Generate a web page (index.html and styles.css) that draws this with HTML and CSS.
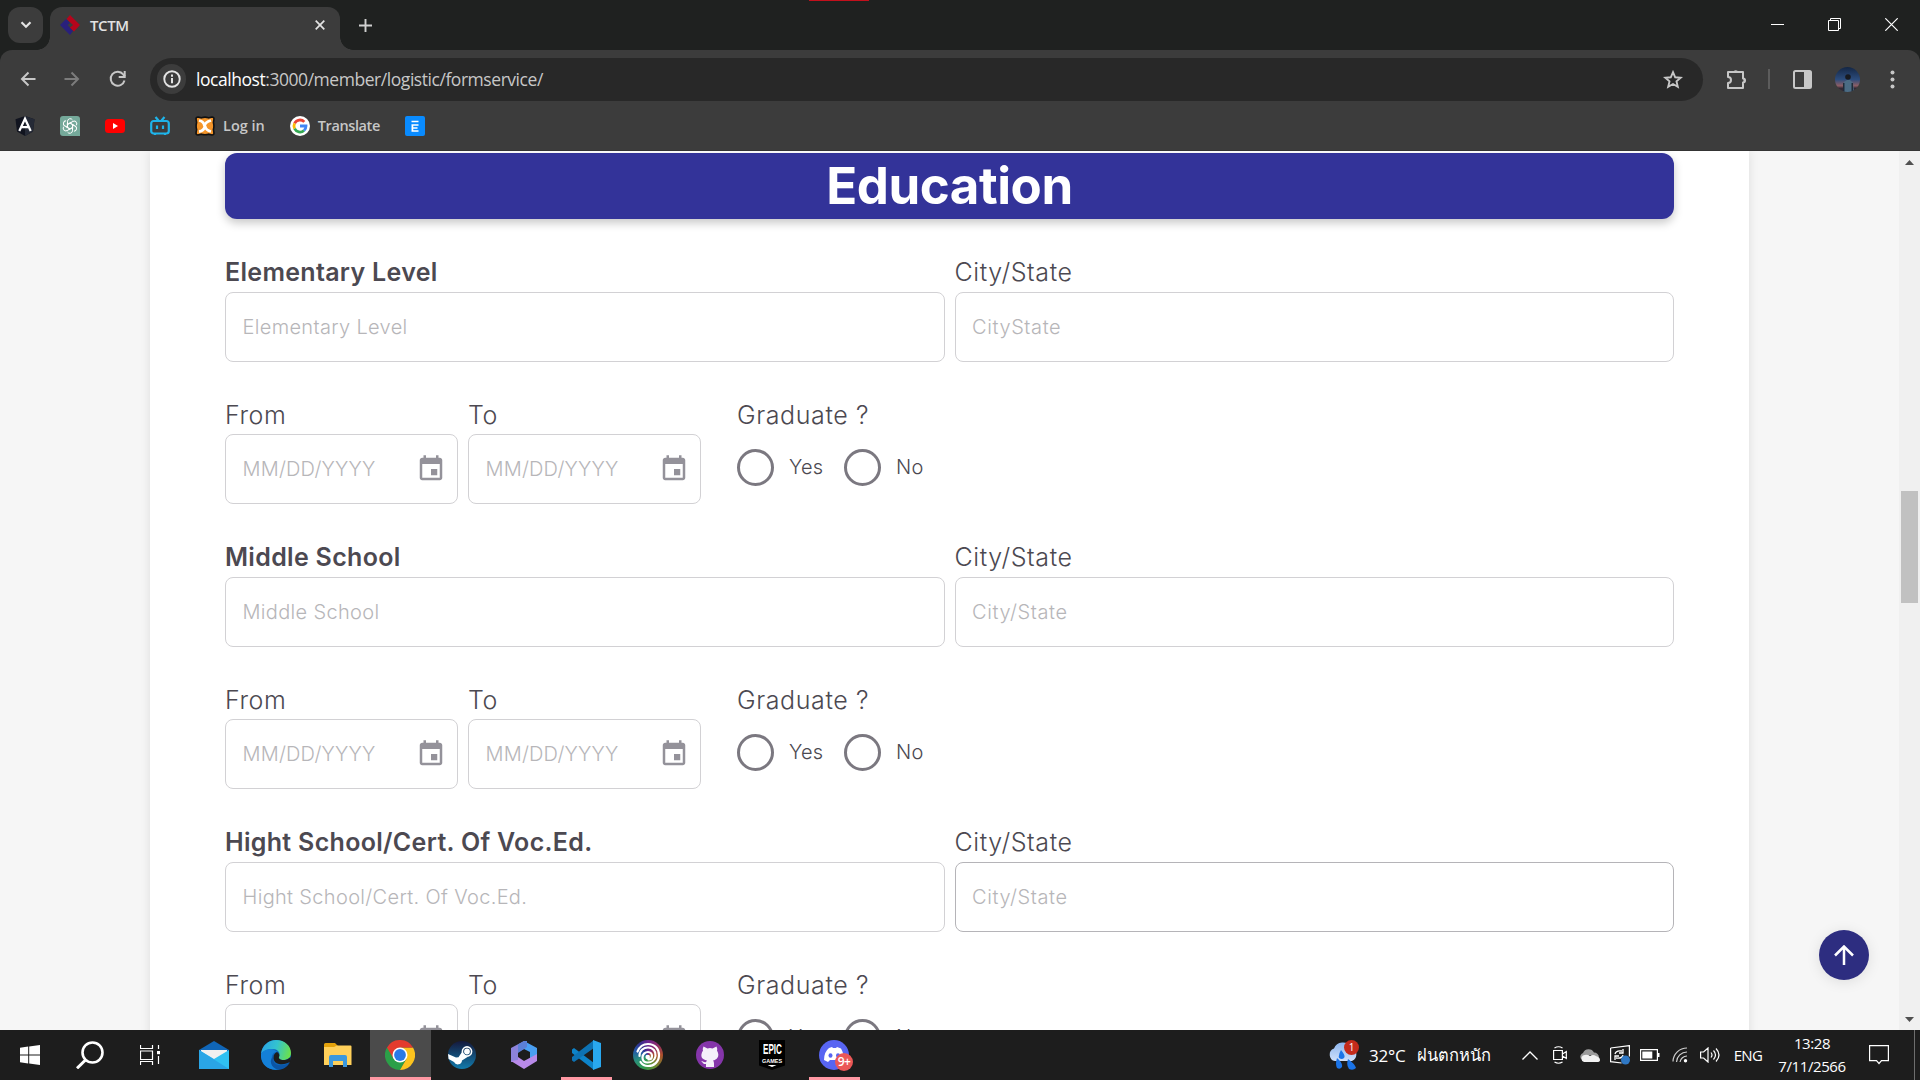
FILE: index.html
```html
<!DOCTYPE html>
<html lang="en">
<head>
<meta charset="utf-8">
<title>TCTM</title>
<link rel="stylesheet" href="styles.css">
</head>
<body>
<div class="screen">
  <header class="browser">
    <div class="tabstrip">
      <div class="tab-search"><svg width="12" height="8" viewBox="0 0 12 8"><path d="M1.500 1.300 6 5.800l4.500-4.500" fill="none" stroke="#e3e3e3" stroke-width="2.200"/></svg></div>
      <div class="tab">
        <svg width="20" height="20" viewBox="0 0 20 20"><path d="M10 0l10 10-6 6.500-4.500-3.500L13 10 6.500 4z" fill="#b5051c"/><path d="M6 4 0 10l10 10 3-4-5.500-6L10 8z" fill="#29207c"/></svg>
        <span class="tab-title">TCTM</span>
        <svg width="10" height="10" viewBox="0 0 10 10"><path d="M.7.7l8.600 8.600M9.300.7.7 9.300" stroke="#e3e3e3" stroke-width="1.700"/></svg>
      </div>
      <svg class="new-tab" width="13" height="13" viewBox="0 0 13 13"><path d="M6.500 0v13M0 6.500h13" stroke="#d0d0d0" stroke-width="1.900"/></svg>
      <div class="window-controls">
        <svg width="13" height="13" viewBox="0 0 13 13"><path d="M0 6.500h13" stroke="#fff"/></svg>
        <svg width="13" height="13" viewBox="0 0 13 13"><path d="M.5 2.500h10v10h-10zM2.500 2.500v-2h10v10h-2" fill="none" stroke="#fff"/></svg>
        <svg width="13" height="13" viewBox="0 0 13 13"><path d="M.3.3l12.400 12.400M12.700.3.3 12.700" stroke="#fff" stroke-width="1.200"/></svg>
      </div>
      <div class="record-mark"></div>
    </div>
    <div class="toolbar">
      <svg class="nav-icon" width="16" height="16" viewBox="0 0 16 16"><path d="M15.500 8H2M8.500 1.500 2 8l6.500 6.500" fill="none" stroke="#c7c7c7" stroke-width="2"/></svg>
      <svg class="nav-icon" width="16" height="16" viewBox="0 0 16 16"><path d="M.5 8H14M7.500 1.500 14 8l-6.500 6.500" fill="none" stroke="#7c7c7c" stroke-width="2"/></svg>
      <svg class="nav-icon" width="18" height="18" viewBox="0 0 18 18"><path d="M15.500 10.500a7 7 0 1 1-1.200-6L16 6.500" fill="none" stroke="#c7c7c7" stroke-width="2"/><path d="M16.700 1v7h-7V6h5V1z" fill="#c7c7c7"/></svg>
      <div class="address">
        <span class="site-info"><svg width="18" height="18" viewBox="0 0 17 17"><circle cx="8.500" cy="8.500" r="7.300" fill="none" stroke="#e3e3e3" stroke-width="1.800"/><path d="M8.500 7.500v5M8.500 4.300v2" stroke="#e3e3e3" stroke-width="1.900"/></svg></span>
        <span class="url"><b>localhost</b>:3000/member/logistic/formservice/</span>
        <svg width="20" height="19" viewBox="0 0 20 19"><path d="M10 2.200l2.200 5.100 5.500.5-4.200 3.600 1.300 5.400L10 14l-4.800 2.800 1.300-5.400L2.300 7.800l5.500-.5z" fill="none" stroke="#c7c7c7" stroke-width="1.900"/></svg>
      </div>
      <div class="tools">
        <svg width="21" height="21" viewBox="0 0 21 21"><path d="M2 3h15v6.500a2 2 0 0 1 0 4V19H2v-5a3 3 0 0 0 0-6z" fill="none" stroke="#c7c7c7" stroke-width="2" stroke-linejoin="round"/><path d="M7 3a3 3 0 0 1 5.500 0zM17.500 8.500a3 3 0 0 1 0 5.600z" fill="#c7c7c7"/></svg>
        <i class="divider"></i>
        <svg width="19" height="19" viewBox="0 0 19 19"><rect x="1" y="1" width="17" height="17" rx="1.500" fill="none" stroke="#c7c7c7" stroke-width="2"/><path d="M11 1h7v17h-7z" fill="#c7c7c7"/></svg>
        <svg width="25" height="25" viewBox="0 0 25 25"><defs><clipPath id="av"><circle cx="12.500" cy="12.500" r="12.500"/></clipPath><linearGradient id="sky" x2="0" y2="1"><stop offset="0" stop-color="#142644"/><stop offset=".5" stop-color="#2c4c7c"/><stop offset=".75" stop-color="#8d5e65"/><stop offset=".85" stop-color="#332836"/></linearGradient></defs><g clip-path="url(#av)"><path d="M0 0h25v25H0z" fill="url(#sky)"/><path d="M8 25l1-10 3-2h3l3 3 1 9z" fill="#4b6c85"/><circle cx="13" cy="10" r="2.800" fill="#171a20"/><path d="M8 16h1.500v9H8zM16.500 16H18v9h-1.500z" fill="#202b38"/></g></svg>
        <svg width="5" height="19" viewBox="0 0 5 19"><g fill="#c7c7c7"><circle cx="2.500" cy="2.500" r="2"/><circle cx="2.500" cy="9.500" r="2"/><circle cx="2.500" cy="16.500" r="2"/></g></svg>
      </div>
    </div>
    <nav class="bookmarks">
      <svg width="20" height="20" viewBox="0 0 19 20"><path d="M9.500 0 19 3.300l-1.500 12.300-8 4.400-8-4.400L0 3.300z" fill="#11141f"/><path d="M9.500 0 19 3.300l-1.500 12.300-8 4.400z" fill="#252a36"/><path d="M3.800 15 9.500 2.700 15.200 15M6 11.200h7" fill="none" stroke="#fff" stroke-width="2.200"/></svg>
      <svg width="20" height="20" viewBox="0 0 20 20"><path d="M3 0h14a3 3 0 0 1 3 3v17H3a3 3 0 0 1-3-3V3a3 3 0 0 1 3-3z" fill="#75a99a"/><g fill="none" stroke="#fff" stroke-width="1"><path id="petal" d="M7.500 8.500V5.200a2.700 2.700 0 0 1 5-1.200M7.500 8.500 10 7l4 2.300"/><use href="#petal" transform="rotate(60 10 10)"/><use href="#petal" transform="rotate(120 10 10)"/><use href="#petal" transform="rotate(180 10 10)"/><use href="#petal" transform="rotate(240 10 10)"/><use href="#petal" transform="rotate(300 10 10)"/></g></svg>
      <svg width="20" height="20" viewBox="0 0 20 20"><rect y="3" width="20" height="14" rx="3.500" fill="#f00"/><path d="M8 7v6l5-3z" fill="#fff"/></svg>
      <svg width="20" height="20" viewBox="0 0 20 20"><rect x="1.200" y="5" width="17.600" height="12.500" rx="2.500" fill="none" stroke="#1eb4ea" stroke-width="2.200"/><path d="M5.500 1l3 3.500M14.500 1l-3 3.500M7 9.500V13M13 9.500V13M5 17.500V19M15 17.500V19" stroke="#1eb4ea" stroke-width="2.200"/></svg>
      <span class="bm-link"><svg width="20" height="20" viewBox="0 0 20 20"><path d="M3 1l3.500.8Q10 .5 13.500 1.800L17 1q2 0 2 2l-.6 3.500q1 3.500 0 7L19 17q0 2-2 2l-3.500-.8q-3.500 1-7 0L3 19q-2 0-2-2l.6-3.500q-1-3.500 0-7L1 3q0-2 2-2z" fill="#f4952a" stroke="#111" stroke-width="1.600"/><path d="M4 4.500q5 1 5.500 5.500Q10 6 16 4.500M4 15.500q5-.5 6-5.500 1 4.500 6 5.500" stroke="#fff" stroke-width="2.800" fill="none"/></svg><span>Log in</span></span>
      <span class="bm-link"><svg width="20" height="20" viewBox="0 0 20 20"><circle cx="10" cy="10" r="10" fill="#fff"/><g fill="none" stroke-width="2.800"><path d="M14.300 5.900A6 6 0 0 0 4.600 7.300" stroke="#ea4335"/><path d="M4.600 7.300a6 6 0 0 0 0 5.400" stroke="#fbbc05"/><path d="M4.600 12.700a6 6 0 0 0 9.400 1.800" stroke="#34a853"/><path d="M10 10h6a6 6 0 0 1-2 4.500" stroke="#4285f4"/></g></svg><span>Translate</span></span>
      <svg width="20" height="20" viewBox="0 0 20 20"><rect width="20" height="20" rx="2" fill="#098bff"/><path d="M6.500 5.500h7M6.500 9h7M6.500 15h7M7.400 9v6M6.500 12h6" stroke="#fff" stroke-width="1.700"/></svg>
    </nav>
  </header>

  <div class="viewport">
    <main class="page">
      <section class="paper">
        <h1 class="banner">Education</h1>

        <div class="row schools">
          <div class="field"><label class="strong">Elementary Level</label><div class="input">Elementary Level</div></div>
          <div class="field"><label>City/State</label><div class="input">CityState</div></div>
        </div>
        <div class="row dates">
          <div class="field"><label>From</label><div class="input date"><span>MM/DD/YYYY</span><svg viewBox="0 0 24 24"><path d="M17 12h-5v5h5v-5zM16 1v2H8V1H6v2H5c-1.110 0-1.990.9-1.990 2L3 19c0 1.100.89 2 2 2h14c1.100 0 2-.9 2-2V5c0-1.100-.9-2-2-2h-1V1h-2zm3 18H5V8h14v11z"/></svg></div></div>
          <div class="field"><label>To</label><div class="input date"><span>MM/DD/YYYY</span><svg viewBox="0 0 24 24"><path d="M17 12h-5v5h5v-5zM16 1v2H8V1H6v2H5c-1.110 0-1.990.9-1.990 2L3 19c0 1.100.89 2 2 2h14c1.100 0 2-.9 2-2V5c0-1.100-.9-2-2-2h-1V1h-2zm3 18H5V8h14v11z"/></svg></div></div>
          <div class="field graduate"><label>Graduate ?</label><div class="choices"><i class="radio"></i><span class="yes">Yes</span><i class="radio"></i><span>No</span></div></div>
        </div>

        <div class="row schools">
          <div class="field"><label class="strong">Middle School</label><div class="input">Middle School</div></div>
          <div class="field"><label>City/State</label><div class="input">City/State</div></div>
        </div>
        <div class="row dates">
          <div class="field"><label>From</label><div class="input date"><span>MM/DD/YYYY</span><svg viewBox="0 0 24 24"><path d="M17 12h-5v5h5v-5zM16 1v2H8V1H6v2H5c-1.110 0-1.990.9-1.990 2L3 19c0 1.100.89 2 2 2h14c1.100 0 2-.9 2-2V5c0-1.100-.9-2-2-2h-1V1h-2zm3 18H5V8h14v11z"/></svg></div></div>
          <div class="field"><label>To</label><div class="input date"><span>MM/DD/YYYY</span><svg viewBox="0 0 24 24"><path d="M17 12h-5v5h5v-5zM16 1v2H8V1H6v2H5c-1.110 0-1.990.9-1.990 2L3 19c0 1.100.89 2 2 2h14c1.100 0 2-.9 2-2V5c0-1.100-.9-2-2-2h-1V1h-2zm3 18H5V8h14v11z"/></svg></div></div>
          <div class="field graduate"><label>Graduate ?</label><div class="choices"><i class="radio"></i><span class="yes">Yes</span><i class="radio"></i><span>No</span></div></div>
        </div>

        <div class="row schools">
          <div class="field"><label class="strong">Hight School/Cert. Of Voc.Ed.</label><div class="input">Hight School/Cert. Of Voc.Ed.</div></div>
          <div class="field"><label>City/State</label><div class="input hover">City/State</div></div>
        </div>
        <div class="row dates">
          <div class="field"><label>From</label><div class="input date"><span>MM/DD/YYYY</span><svg viewBox="0 0 24 24"><path d="M17 12h-5v5h5v-5zM16 1v2H8V1H6v2H5c-1.110 0-1.990.9-1.990 2L3 19c0 1.100.89 2 2 2h14c1.100 0 2-.9 2-2V5c0-1.100-.9-2-2-2h-1V1h-2zm3 18H5V8h14v11z"/></svg></div></div>
          <div class="field"><label>To</label><div class="input date"><span>MM/DD/YYYY</span><svg viewBox="0 0 24 24"><path d="M17 12h-5v5h5v-5zM16 1v2H8V1H6v2H5c-1.110 0-1.990.9-1.990 2L3 19c0 1.100.89 2 2 2h14c1.100 0 2-.9 2-2V5c0-1.100-.9-2-2-2h-1V1h-2zm3 18H5V8h14v11z"/></svg></div></div>
          <div class="field graduate"><label>Graduate ?</label><div class="choices"><i class="radio"></i><span class="yes">Yes</span><i class="radio"></i><span>No</span></div></div>
        </div>
      </section>
      <div class="to-top"><svg width="20" height="20" viewBox="0 0 20 20"><path d="M10 20V2M1 10.500l9-9 9 9" fill="none" stroke="#fff" stroke-width="2.500"/></svg></div>
    </main>
    <aside class="scrollbar">
      <svg width="9" height="5" viewBox="0 0 9 5"><path d="M0 5 4.500 0 9 5z" fill="#505050"/></svg>
      <div class="thumb"></div>
      <svg width="9" height="5" viewBox="0 0 9 5"><path d="M0 0h9L4.500 5z" fill="#505050"/></svg>
    </aside>
  </div>

  <footer class="taskbar">
    <div class="sys"><svg width="20" height="20" viewBox="0 0 20 20"><path d="M0 2.700 8.200 1.600V9.400H0zM9.200 1.400 20 0v9.400H9.200zM0 10.400h8.200v8L0 17.300zM9.200 10.400H20V20L9.200 18.500z" fill="#fff"/></svg></div>
    <div class="sys"><svg width="28" height="28" viewBox="0 0 28 28"><circle cx="16.500" cy="11.500" r="10" fill="none" stroke="#fff" stroke-width="2.600"/><path d="M9.500 19 1 27.300" stroke="#fff" stroke-width="3"/></svg></div>
    <div class="sys"><svg width="20" height="20" viewBox="0 0 20 20"><path d="M.5 0v3.500h12V0M.5 20v-3.500h12V20M.5 6h12v8.500H.5zM18.500 0v4M18.500 11v8" fill="none" stroke="#fff" stroke-width="1.200"/><path d="M17 6h3v3.200h-3z" fill="#fff"/></svg></div>
    <div class="apps">
      <div class="app"><svg width="30" height="28" viewBox="0 0 30 28"><path d="M0 9 15 0l15 9v5H0z" fill="#1066b8"/><path d="M2 9h26v12H2z" fill="#f0f0f0"/><path d="M0 9l15 9L30 9v19H0z" fill="#2fc0f2"/><path d="M0 9l30 19H0z" fill="#2aa5e6"/></svg></div>
      <div class="app"><svg width="30" height="30" viewBox="0 0 30 30"><defs><linearGradient id="eg" x1="0" y1=".3" x2="1" y2=".5"><stop offset="0" stop-color="#2aa3e6"/><stop offset=".5" stop-color="#33c3cf"/><stop offset="1" stop-color="#6be04c"/></linearGradient></defs><circle cx="15" cy="15" r="15" fill="#0d64b8"/><path d="M0 14C1 5 8 0 15 0c9 0 15 6 15 13 0 5-4 7-8 7-3 0-5-1-4-3 2-5-2-8-6-8C7 9 2 11 0 14z" fill="url(#eg)"/><path d="M0 14c2-4 7-5 10-5 3 0 5 2 6 3-4 0-6 4-5 8 1 5 5 8 8 9C9 32-1 25 0 14z" fill="#1480d8"/><path d="M16 12c-6 3-4 11 2 12 5 1 8-1 11-2l1-5-4 2.500c-5 1.500-9-.5-8-2.500s0-4-2-5z" fill="#1d1d1d"/><path d="M13 16c-2 4 0 9 5 9 5 1 8-1 11-3-3 6-9 9-14 7-6-3-7-10-2-13z" fill="#0b55a5"/></svg></div>
      <div class="app"><svg width="28" height="24" viewBox="0 0 28 24"><path d="M0 1.500Q0 0 1.500 0H11l3 3h12v6H0z" fill="#e4a20b"/><path d="M0 4h10l3-1.500h13.500q1 0 1 1V22H0z" fill="#ffd05a"/><path d="M5 24V14q0-2 2-2h14q2 0 2 2v10h-4v-6h-10v6z" fill="#3b98dd"/></svg></div>
      <div class="app active"><svg width="30" height="30" viewBox="0 0 30 30"><path d="M15 15 2 7.500A15 15 0 0 0 15 30l6.500-11.300z" fill="#2b9f48"/><path d="M15 7.500h13A15 15 0 0 1 15 30l6.500-11.300z" fill="#fcc31e"/><path d="M2 7.500A15 15 0 0 1 28 7.500H15l-6.500 11.300z" fill="#e33b2e"/><circle cx="15" cy="15" r="7.500" fill="#fff"/><circle cx="15" cy="15" r="5.900" fill="#2a79e8"/></svg></div>
      <div class="app"><svg width="28" height="28" viewBox="0 0 28 28"><defs><linearGradient id="st" x2="0" y2="1"><stop offset="0" stop-color="#15183b"/><stop offset="1" stop-color="#127bac"/></linearGradient></defs><circle cx="14" cy="14" r="14" fill="url(#st)"/><circle cx="19" cy="10.500" r="4.600" fill="none" stroke="#fff" stroke-width="1.600"/><circle cx="19" cy="10.500" r="2.900" fill="#fff"/><path d="M0 13l8 3.500 2.500-.2L14 11l5.500 5-5.500 3.500a4.200 4.200 0 0 1-8 1.500L.6 18z" fill="#fff"/></svg></div>
      <div class="app"><svg width="26" height="28" viewBox="0 0 26 28"><path d="M13 0 26 7v12l-7-2V11l-6-3z" fill="#4a9ff2"/><path d="M0 7 13 0v8L7 11v9l-7 1z" fill="#8c83dc"/><path d="M7 3.500 13 0h3v6l-9 6z" fill="#5b7fd6"/><path d="M0 20l7-1v-3l6 4 13-7v7l-13 8z" fill="#b88ae9"/><path d="M9.500 11.500l4-2.500 4 2.500v5l-4 2.500-4-2.500z" fill="#1d1d1d"/></svg></div>
      <div class="app open"><svg width="30" height="30" viewBox="0 0 30 30"><path d="M1 9.500 3 8l20 15v7L1 13z" fill="#0d83c9"/><path d="M1 20.500 3 22 23 8V0L1 17z" fill="#0d72b3"/><path d="M22 0l8 3v24l-8 3z" fill="#29a8ef"/></svg></div>
      <div class="app"><svg class="swirl" width="30" height="30" viewBox="0 0 30 30"><g fill="none" stroke="#fff" stroke-width="2.200" stroke-linecap="round"><path d="M4.500 11.500C7 5.500 12 4 15 4c7 0 11 5 11 11 0 7-5 11-11 11-3 0-6-1.500-7.500-4"/><path d="M6.500 16C6.500 10 11 7.500 15 7.500c5 0 8 4 7.500 8.500-.5 4-4 6.500-8 6.500-3 0-5-2-5-5 0-3.500 3-5.500 5.500-5.500s4 2 4 4-1.500 3.500-3.500 3.500"/></g><circle cx="14.700" cy="17" r="2.300" fill="#fff"/></svg></div>
      <div class="app"><svg width="28" height="28" viewBox="0 0 28 28"><circle cx="14" cy="14" r="14" fill="#8535aa"/><path d="M7.500 5.500l4 2q2.500-.8 5 0l4-2q1 2 .5 4c3.500 6-.5 9.500-4 10q1 1 1 3v3.500h-8v-3c-3 .7-3.500-2.500-5-3 2-.5 3 2 5 1l1-1.500c-5-1-7.500-4-4-10q-.5-2 .5-4z" fill="#f4effa"/></svg></div>
      <div class="app"><span class="epic"><b>EPIC</b><small>GAMES</small><i></i></span></div>
      <div class="app open discord"><svg width="30" height="30" viewBox="0 0 30 30"><circle cx="15" cy="15" r="15" fill="#5865f2"/><path d="M10 8l3-1 1 1h3l1-1 4 1.500q3 5 3 12l-4 1.500-2-2h-8l-2 2-4-2q0-8 5-12z" fill="#fff"/><ellipse cx="11.500" cy="15.500" rx="2" ry="2.300" fill="#5865f2"/><ellipse cx="19" cy="15.500" rx="2" ry="2.300" fill="#5865f2"/></svg><span class="count">9+</span></div>
    </div>
    <div class="weather">
      <svg width="31" height="30" viewBox="0 0 31 30"><defs><linearGradient id="cl" x2="0" y2="1"><stop offset="0" stop-color="#8db6ee"/><stop offset="1" stop-color="#d0e0fa"/></linearGradient></defs><path d="M7 21a6.500 6.500 0 0 1-1-12.500 9.500 9.500 0 0 1 17-1.500 7.500 7.500 0 0 1 1 14z" fill="url(#cl)"/><g fill="#1b74e8"><path d="M13 10q5 6 3 8t-5 0q-1-3 2-8zM9 18q6 5 5 9-2 3-5 1-2-4 0-10zM20 19q7 5 8 9-3 3-7 1-3-4-1-10z"/></g></svg>
      <span class="alert">1</span>
      <span class="temp">32°C</span><span class="cond" lang="th">ฝนตกหนัก</span>
    </div>
    <div class="tray">
      <span><svg width="16" height="9" viewBox="0 0 16 9"><path d="M.5 8.500 8 1l7.500 7.500" fill="none" stroke="#fff" stroke-width="1.300"/></svg></span>
      <span><svg width="14" height="18" viewBox="0 0 14 18"><path d="M.6 4.500h8.800v9H.6zM9.500 8l3.800-2.500v7L9.500 10M1.500 2q4-2.500 8 0M1.500 16q4 2.500 8 0" fill="none" stroke="#fff" stroke-width="1.200"/></svg></span>
      <span><svg width="20" height="13" viewBox="0 0 20 13"><path d="M1 10a4 4 0 0 1 2-6 6 6 0 0 1 11-.5 5 5 0 0 1 5 5L10 6z" fill="#9c9c9c"/><path d="M4 13a3.600 3.600 0 0 1-1-6.500q4-1.500 7 .5 3-2 6 0 4 1 4 4 0 2-3 2z" fill="#f2f2f2"/></svg></span>
      <span><svg width="20" height="20" viewBox="0 0 20 20"><path d="M.6 3 19.400.6v11M.6 3v13.600l11 1.400" fill="none" stroke="#fff" stroke-width="1.200"/><path d="M5 9q1-4 7-3M13 4v4H9M13 10q-1 4-7 3M5 15v-4h4" fill="none" stroke="#fff" stroke-width="1.300"/><circle cx="15.500" cy="15" r="4.500" fill="#2f78c5"/></svg></span>
      <span><svg width="20" height="12" viewBox="0 0 20 12"><path d="M.6.6h16.800v10.800H.6z" fill="none" stroke="#fff" stroke-width="1.200"/><path d="M2.300 2.400h10v7.200h-10zM18 4h1.500v4H18z" fill="#fff"/></svg></span>
      <span><svg width="16" height="16" viewBox="0 0 16 16"><path d="M1 14.500A14 14 0 0 1 15 1M4.500 15A10.500 10.500 0 0 1 15 5M8 15a7 7 0 0 1 7-6" fill="none" stroke="#d0d0d0" stroke-width="1.200"/><circle cx="13.500" cy="13.700" r="1.700" fill="#fff"/></svg></span>
      <span><svg width="20" height="16" viewBox="0 0 20 16"><path d="M.6 5h3L8 1v14l-4.400-4h-3zM11 5.500q2 2.500 0 5M13.500 3.500q4 4.500 0 9M16 1.500q6 6.500 0 13" fill="none" stroke="#fff" stroke-width="1.200"/></svg></span>
    </div>
    <div class="lang">ENG</div>
    <div class="clock"><span>13:28</span><span>7/11/2566</span></div>
    <div class="notify"><svg width="20" height="20" viewBox="0 0 20 20"><path d="M.6.6h18.800v15h-6.900L10 18.500l-2.500-2.900H.6z" fill="none" stroke="#fff" stroke-width="1.200"/></svg></div>
    <div class="peek"></div>
  </footer>
</div>
</body>
</html>
```
FILE: styles.css
```css
* { box-sizing: border-box; }
body { margin: 0; font-family: Inter, sans-serif; }
svg { display: block; flex: none; }
.screen { width: 1920px; height: 1080px; display: flex; flex-direction: column; overflow: hidden; }

/* Browser frame */
.browser { height: 151px; flex: none; background: #1f2120; font-family: "Open Sans", sans-serif; color: #e3e3e3; }
.tabstrip { height: 50px; display: flex; align-items: flex-start; position: relative; padding-left: 8px; }
.tab-search { width: 35px; height: 36px; margin-top: 7px; border-radius: 12px; background: #3c3c3c; display: flex; align-items: center; justify-content: center; }
.tab { position: relative; width: 290px; height: 43px; margin: 7px 0 0 7px; padding: 0 15px 7px 10px; border-radius: 12px 12px 0 0; background: #3c3c3c; display: flex; align-items: center; }
.tab::before, .tab::after { content: ""; position: absolute; bottom: 0; width: 13px; height: 13px; }
.tab::before { left: -13px; background: radial-gradient(circle at 0 0, transparent 12.5px, #3c3c3c 13px); }
.tab::after { right: -13px; background: radial-gradient(circle at 100% 0, transparent 12.5px, #3c3c3c 13px); }
.tab-title { flex: 1; margin-left: 10px; font-size: 15px; font-weight: 600; letter-spacing: -.4px; }
.new-tab { margin: 18.5px 0 0 19px; }
.window-controls { margin-left: auto; display: flex; gap: 44px; padding: 18px 22px 0 0; }
.record-mark { position: absolute; left: 809px; top: 0; width: 60px; height: 1px; background: #c3101c; }

.toolbar { height: 58px; background: #3c3c3c; border-radius: 12px 12px 0 0; display: flex; align-items: center; padding-left: 20px; }
.nav-icon { margin-right: 28px; }
.nav-icon:nth-child(3) { margin: 0 23px 0 1px; }
.address { width: 1553px; height: 43px; flex: none; border-radius: 22px; background: #282828; display: flex; align-items: center; padding: 0 20px 0 7px; }
.site-info { width: 29px; height: 30px; border-radius: 15px; background: #3c3c3c; display: flex; align-items: center; justify-content: center; }
.url { flex: 1; margin-left: 10px; font-size: 17.5px; letter-spacing: -.45px; color: #c7c7c7; }
.url b { font-weight: 400; color: #fff; }
.tools { display: flex; align-items: center; margin-left: 23px; }
.divider { width: 2px; height: 20px; background: #5c5c5c; margin: 0 23px 0 21px; }
.tools svg:nth-child(4) { margin: 0 30px 0 23px; }

.bookmarks { height: 43px; background: #3c3c3c; border-bottom: 1px solid #343434; display: flex; align-items: flex-start; padding: 8px 0 0 15px; gap: 25px; font-size: 14.5px; font-weight: 600; letter-spacing: -.4px; color: #c7c7c7; }
.bookmarks > * { height: 20px; }
.bm-link { display: flex; align-items: center; gap: 8px; }
.bm-link:nth-child(5) { letter-spacing: 0; }
.bm-link span { white-space: nowrap; line-height: 20px; }

/* Page */
.viewport { height: 879px; flex: none; display: flex; }
.page { position: relative; width: 1899px; height: 879px; overflow: hidden; background: #f6f6f6; display: flex; justify-content: center; }
.paper { width: 1599px; height: 1000px; flex: none; background: #fff; padding: 2px 75px 0; box-shadow: 0 0 10px rgba(0,0,0,.1); color: #4c4951; }
.banner { margin: 0 0 33px; height: 66px; border-radius: 12px; background: #333399; box-shadow: 0 4px 10px rgba(0,0,0,.22); color: #fff; font-size: 51px; font-weight: 700; line-height: 66px; text-align: center; letter-spacing: -.45px; }
.row { height: 110px; margin-bottom: 32px; display: grid; column-gap: 10px; }
.schools { grid-template-columns: 1fr 1fr; }
.dates { grid-template-columns: 233px 233px 300px; margin-bottom: 33px; }
.field label { display: block; height: 40px; line-height: 40px; font-size: 25px; font-weight: 300; letter-spacing: .6px; white-space: nowrap; }
.dates label { line-height: 42px; }
.field .strong { font-weight: 600; letter-spacing: .31px; }
.input { height: 70px; border: 1px solid #d2d1d4; border-radius: 8px; padding: 0 17px 0 16.5px; display: flex; align-items: center; font-size: 20px; font-weight: 300; letter-spacing: .33px; color: #b7b6b9; }
.schools .field:last-child .input { letter-spacing: .6px; }
.input.hover { border-color: #b5b4b8; }
.input.date { justify-content: space-between; padding-right: 11px; letter-spacing: .19px; }
.date svg { width: 30px; height: 30px; fill: #94929a; }
.graduate { padding-left: 26px; }
.choices { height: 67px; display: flex; align-items: center; font-size: 20px; font-weight: 300; letter-spacing: .19px; }
.choices span { padding-bottom: 2px; }
.radio { width: 37px; height: 37px; border: 3px solid #7b7880; border-radius: 50%; margin-right: 15px; }
.yes { width: 55px; }
.to-top { position: absolute; left: 1819px; top: 779px; width: 50px; height: 50px; border-radius: 50%; background: #2d2d80; box-shadow: 0 2px 14px rgba(0,0,0,.1); display: flex; align-items: center; justify-content: center; }
.scrollbar { width: 21px; background: #f0f0f0; display: flex; flex-direction: column; align-items: center; padding: 9px 0 8px; }
.thumb { width: 17px; height: 112px; margin: 326px 0 auto; background: #c1c1c1; }

/* Taskbar */
.taskbar { height: 50px; flex: none; background: #1d1d1d; display: flex; color: #fff; font-family: "Open Sans", sans-serif; }
.sys { width: 60px; display: flex; align-items: center; justify-content: center; }
.apps { display: flex; margin-left: 3px; width: 1146px; }
.app { position: relative; width: 62px; display: flex; align-items: center; justify-content: center; }
.active { background: #4b4b4b; width: 61px; margin-left: 1px; padding-right: 1px; box-shadow: inset 0 -3px #ff98a3; }
.open::after { content: ""; position: absolute; left: 6px; right: 5px; bottom: 0; height: 3px; background: #ff98a3; }
.swirl { border-radius: 50%; background: conic-gradient(#6a2490, #8d2a6a 12%, #b0502c 25%, #6f8a2f 40%, #2f9a4c 55%, #2a8f7c 68%, #2358a8 80%, #33308c 90%, #6a2490); }
.epic { width: 26px; height: 30px; background: #000; clip-path: polygon(0 0,100% 0,100% 85%,50% 100%,0 85%); display: flex; flex-direction: column; align-items: center; color: #fff; font-family: "Liberation Sans", sans-serif; }
.epic b { font-size: 15px; line-height: 18px; transform: scaleX(.54); }
.epic small { font-size: 5.5px; font-weight: 700; line-height: 6px; }
.epic i { width: 9px; height: 2px; margin-top: 1px; background: #fff; clip-path: polygon(0 0,100% 0,50% 100%); }
.count { position: absolute; left: 32px; top: 23px; width: 18px; height: 18px; border-radius: 50%; background: #eb5757; font-size: 12px; font-weight: 600; line-height: 17px; text-align: center; letter-spacing: -.5px; }
.weather { position: relative; width: 186px; display: flex; align-items: center; }
.weather > svg { margin-left: -1px; }
.alert { position: absolute; left: 15px; top: 10px; width: 15px; height: 15px; border-radius: 50%; background: #c42b1c; font-size: 10px; line-height: 15px; text-align: center; }
.temp { margin-left: 10px; width: 48px; font-size: 17px; letter-spacing: -.2px; white-space: nowrap; }
.cond { font-size: 16.5px; white-space: nowrap; }
.tray { display: flex; width: 210px; }
.tray span { width: 30px; display: flex; align-items: center; justify-content: center; }
.lang { width: 46px; font-size: 15px; line-height: 51px; text-align: center; letter-spacing: -.6px; }
.clock { width: 82px; display: flex; flex-direction: column; align-items: center; font-size: 15px; line-height: 23px; letter-spacing: -.4px; padding-top: 2px; }
.notify { width: 52px; display: flex; align-items: center; justify-content: center; }
.peek { width: 10px; border-right: 1px solid #6d6d6d; }
```
